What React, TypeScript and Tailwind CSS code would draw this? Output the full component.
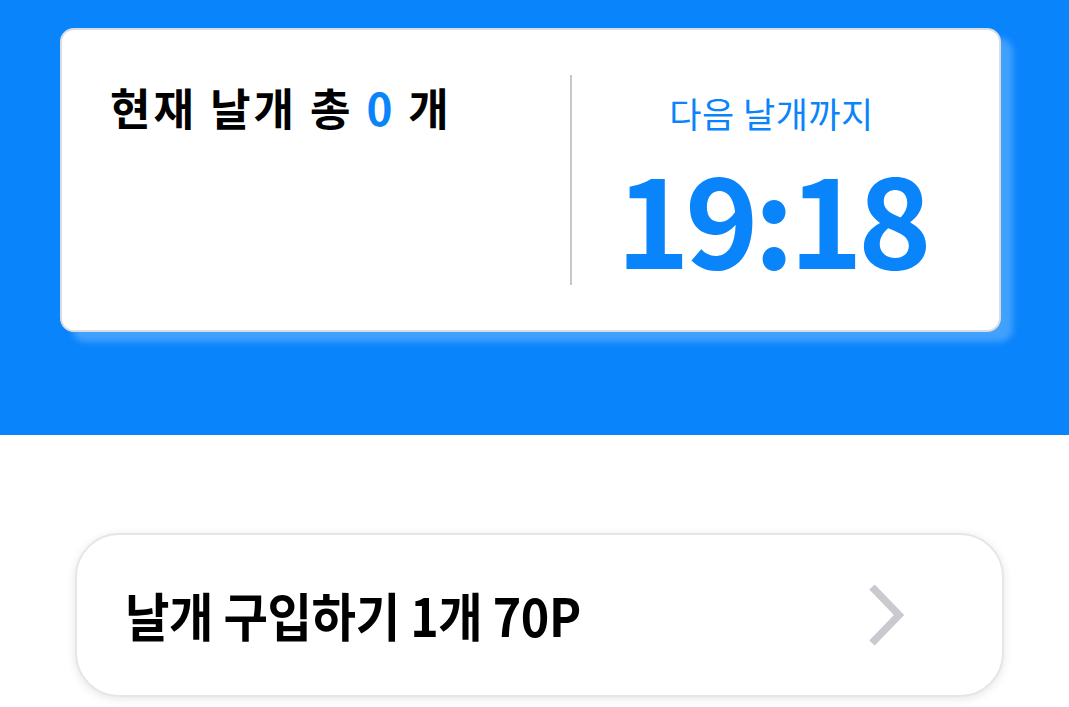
const fontStack = { fontFamily: '"Noto Sans CJK KR", "Noto Sans", sans-serif' };

function ChevronRight() {
  return (
    <svg width="42" height="64" viewBox="0 0 42 64" fill="none">
      <path d="M6 4 L33 32 L6 60" stroke="#c9c9cf" strokeWidth="7.5" strokeLinecap="butt" strokeLinejoin="miter" />
    </svg>
  );
}

function WingStatusCard() {
  return (
    <div className="flex h-[304px] w-[941px] rounded-[14px] border-2 border-[#d9dde3] bg-white shadow-[12px_10px_6px_rgba(120,190,255,0.5)]">
      <div className="flex-1 pl-[48px] pt-[55px]">
        <p className="text-[44px] font-bold leading-none tracking-[3px] text-black">
          현재 날개 총 <span className="text-[#0a84fb]">0</span> 개
        </p>
      </div>
      <div className="my-[45px] w-[2px] bg-[#c8c8c8]" />
      <div className="flex w-[427px] flex-col items-center pr-[28px] pt-[62px]">
        <p className="text-[35px] leading-[1.2] tracking-[0.5px] text-[#0a84fb]">다음 날개까지</p>
        <p className="mt-[12px] text-[125px] font-bold leading-[1.1] tracking-[-5px] text-[#0a84fb]">19:18</p>
      </div>
    </div>
  );
}

function BuyWingRow() {
  return (
    <div className="flex h-[164px] w-[929px] items-center justify-between rounded-[44px] border-2 border-[#e6e6e6] bg-white pl-[48px] pr-[94px] shadow-[0_2px_10px_rgba(0,0,0,0.1)]">
      <p className="origin-left scale-x-[0.93] text-[52px] font-bold leading-none tracking-[-0.5px] whitespace-nowrap text-black">
        날개 구입하기 1개 70P
      </p>
      <ChevronRight />
    </div>
  );
}

export default function App() {
  return (
    <div className="h-[707px] w-full overflow-hidden bg-white" style={fontStack}>
      <div className="h-[435px] bg-[#0a84fb] pl-[60px] pt-[28px]">
        <WingStatusCard />
      </div>
      <div className="pl-[75px] pt-[98px]">
        <BuyWingRow />
      </div>
    </div>
  );
}
